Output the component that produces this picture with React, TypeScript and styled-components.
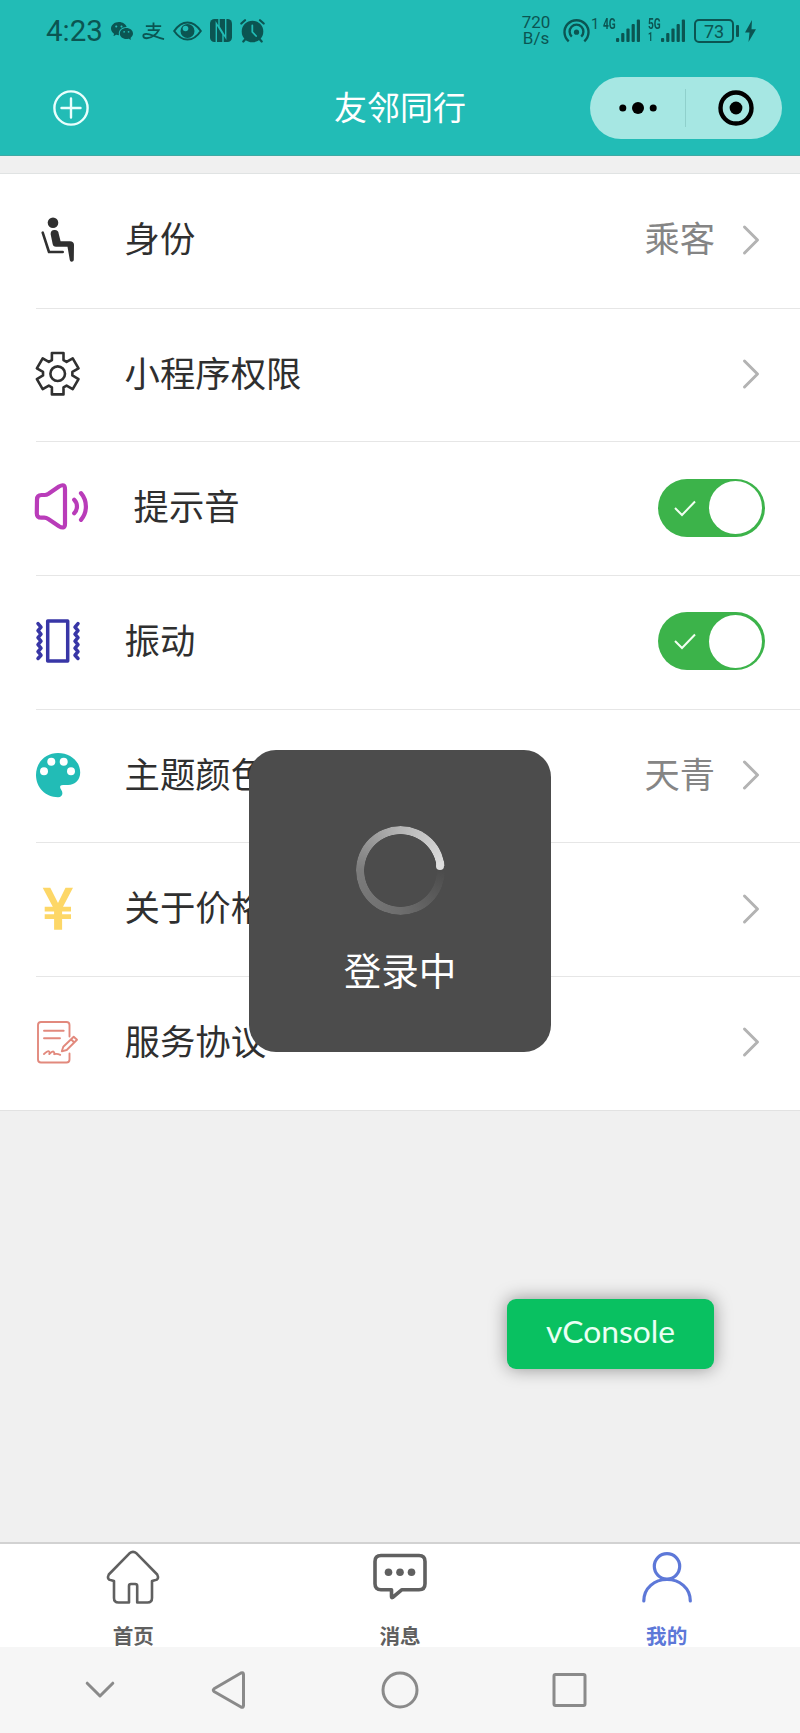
import React from 'react';
import styled, { createGlobalStyle } from 'styled-components';
import { RiWechatFill } from 'react-icons/ri';

const TEAL = '#22bcb6';
const INK = '#0b5552';
const CJK = '"Noto Sans CJK SC", sans-serif';

const GlobalStyle = createGlobalStyle`
  * { box-sizing: border-box; }
  body { margin: 0; background: #f0f0f0; font-family: ${CJK}; }
  svg { display: block; overflow: visible; flex: none; }
`;

const Screen = styled.div`
  position: relative;
  width: 800px;
  height: 1733px;
  display: flex;
  flex-direction: column;
  overflow: hidden;
  background: #f0f0f0;
`;

/* ---------- header ---------- */
const Header = styled.header`
  height: 156px;
  background: ${TEAL};
  border-bottom: 1px solid #3fa9a4;
`;

const StatusBar = styled.div`
  height: 61px;
  padding: 0 43px 0 46px;
  display: flex;
  align-items: center;
  justify-content: space-between;
  color: ${INK};
  font-family: Roboto, sans-serif;
`;

const StatusGroup = styled.div`
  display: flex;
  align-items: center;
`;

const StatusIcons = styled(StatusGroup)`
  gap: 8px;
`;

const Clock = styled.span`
  width: 64px;
  font-size: 29.5px;
  line-height: 60px;
`;

const Speed = styled.div`
  width: 30px;
  margin-right: 12px;
  font-size: 17px;
  line-height: 15.5px;
  text-align: center;
`;

const HotspotCount = styled.span`
  width: 13px;
  height: 23px;
  padding-left: 1px;
  font-size: 14.5px;
  line-height: 11px;
`;

const Signal = styled.div`
  width: 37px;
  height: 23px;
  margin-right: 8px;
  display: flex;
`;

const NetLabel = styled.div`
  width: 13px;
  height: 23px;
  display: flex;
  flex-direction: column;
  justify-content: space-between;
  font-size: 14.5px;
  font-weight: 700;
  line-height: 11px;
  transform: scaleX(0.7);
  transform-origin: left;
`;

const SlotNumber = styled.span`
  font-size: 12px;
  line-height: 9px;
`;

const Battery = styled.div`
  position: relative;
  width: 40px;
  height: 24px;
  margin: 0 11px 0 1px;
  border: 2px solid ${INK};
  border-radius: 5px;
  font-size: 18px;
  line-height: 21px;
  text-align: center;

  &::after {
    content: '';
    position: absolute;
    right: -6.5px;
    top: 4px;
    width: 2.5px;
    height: 12px;
    border-radius: 1px;
    background: ${INK};
  }
`;

const TitleBar = styled.div`
  height: 93px;
  padding: 0 18px 0 53px;
  display: grid;
  grid-template-columns: 281px 1fr 192px;
  align-items: center;
`;

const Title = styled.h1`
  margin: 0 0 4px;
  font-size: 33px;
  font-weight: 400;
  line-height: 48px;
  color: #fff;
  white-space: nowrap;
`;

const Capsule = styled.div`
  width: 192px;
  height: 62px;
  display: flex;
  align-items: center;
  border-radius: 31px;
  background: #a6e7e3;
`;

const CapsuleHalf = styled.div<{ $divided?: boolean }>`
  width: 96px;
  height: 38px;
  padding-left: ${(p) => (p.$divided ? 0 : 4)}px;
  display: flex;
  align-items: center;
  justify-content: center;
  border-right: ${(p) => (p.$divided ? '1px solid #8fd0cc' : '0')};
`;

/* ---------- settings list ---------- */
const List = styled.main`
  margin-top: 17px;
  border-top: 1px solid #e0e3e3;
  border-bottom: 1px solid #e2e2e2;
  background: #fff;
`;

const RowBody = styled.div`
  flex: 1;
  padding: 0 35px 2px 0;
  display: flex;
  align-items: center;
`;

const Row = styled.div`
  height: 133.7px;
  padding-left: 36px;
  display: flex;

  & + & > ${RowBody} { border-top: 1.5px solid #e6e6e6; }
`;

const IconSlot = styled.div<{ $wide?: boolean }>`
  width: ${(p) => (p.$wide ? 98 : 89)}px;
  margin-left: -0.5px;
`;

const Label = styled.span`
  flex: 1;
  padding-bottom: 5px;
  font-size: 35.4px;
  line-height: 52px;
  color: #2f2f2f;
`;

const Value = styled.span`
  margin-right: 28px;
  padding-bottom: 5px;
  font-size: 35.3px;
  line-height: 52px;
  color: #858585;
`;

const Arrow = styled.div`
  width: 16px;
  margin-right: 6px;
`;

const Switch = styled.div`
  width: 107px;
  height: 58px;
  padding: 0 3px 0 16px;
  display: flex;
  align-items: center;
  justify-content: space-between;
  border-radius: 29px;
  background: #3cb34a;
`;

const Knob = styled.div`
  width: 53px;
  height: 53px;
  border-radius: 50%;
  background: #fff;
`;

/* ---------- overlays ---------- */
const Toast = styled.div`
  position: absolute;
  left: 249px;
  top: 750px;
  width: 302px;
  height: 302px;
  padding-top: 76px;
  display: flex;
  flex-direction: column;
  align-items: center;
  border-radius: 27px;
  background: #4c4c4c;
`;

const Spinner = styled.div`
  position: relative;
  width: 89px;
  height: 89px;

  &::before {
    content: '';
    position: absolute;
    inset: 0;
    border-radius: 50%;
    background: conic-gradient(from 90deg, #4c4c4c 0deg, #6e6e6e 90deg, #7c7c7c 180deg, #b4b4b4 268deg, #dedede 354deg, #4c4c4c 354.5deg);
    mask: radial-gradient(circle, transparent 36px, #000 36.7px);
  }

  &::after {
    content: '';
    position: absolute;
    left: 80.8px;
    top: 36.2px;
    width: 7.8px;
    height: 7.8px;
    border-radius: 50%;
    background: #dedede;
  }
`;

const ToastText = styled.div`
  margin-top: 26px;
  font-size: 37.6px;
  line-height: 56px;
  color: #fff;
`;

const ConsoleButton = styled.button`
  position: absolute;
  left: 507px;
  top: 1299px;
  width: 207px;
  height: 70px;
  padding: 0 0 6px;
  border: 0;
  border-radius: 9px;
  background: #09c161;
  box-shadow: 0 0 18px rgba(0, 0, 0, 0.4);
  color: #eafff4;
  font-family: Lato, sans-serif;
  font-size: 31.8px;
`;

/* ---------- bottom ---------- */
const TabBar = styled.nav`
  height: 105px;
  margin-top: auto;
  display: grid;
  grid-template-columns: repeat(3, 1fr);
  border-top: 2px solid #d2d2d2;
  background: #fff;
`;

const Tab = styled.div<{ $active?: boolean }>`
  padding-top: 3px;
  display: flex;
  flex-direction: column;
  align-items: center;
  color: ${(p) => (p.$active ? '#5d78d8' : '#606060')};
`;

const TabLabel = styled.span`
  margin-top: 17px;
  font-size: 20.6px;
  line-height: 30px;
  font-weight: 700;
`;

const SystemNav = styled.div`
  height: 86px;
  display: grid;
  grid-template-columns: 200px 58px 284px 56px;
  align-items: center;
  justify-items: center;
  background: #f6f6f6;
`;

/* ---------- icons ---------- */
const AlipayIcon = () => (
  <svg width="23" height="20" viewBox="0 0 24 20" fill="none" stroke={INK} strokeWidth="1.9">
    <path d="M4 5h16M12 1v8M6 9h11.500C15.500 13 10 17.600 5 17.600c-4.500 0-5-4.600-.5-4.600 5 0 10 4 18.500 5.400" />
  </svg>
);

const EyeIcon = () => (
  <svg width="29" height="20" viewBox="0 0 29 20">
    <path d="M1.200 10Q7 1.400 14.500 1.400T27.800 10Q22 18.600 14.500 18.600T1.200 10z" fill="none" stroke={INK} strokeWidth="2" />
    <circle cx="14.500" cy="10" r="7" fill={INK} />
    <circle cx="12.500" cy="7.500" r="2.800" fill={TEAL} />
  </svg>
);

const NfcIcon = () => (
  <svg width="22" height="23" viewBox="0 0 22 23">
    <rect width="22" height="23" rx="4.500" fill={INK} />
    <path d="M6.300 23V4.500L13 15.500V23M15.700 0V18.500L9 7.500V0" fill="none" stroke={TEAL} strokeWidth="1.400" />
  </svg>
);

const AlarmIcon = () => (
  <svg width="25" height="24" viewBox="0 0 25 24" fill="none" stroke={INK} strokeWidth="2.200" strokeLinecap="round">
    <circle cx="12.500" cy="12.500" r="9.700" fill={INK} />
    <path d="M1.300 4.500 5 1.200M23.700 4.500 20 1.200M5.500 20l-2.200 2.500M19.500 20l2.200 2.500" />
    <path d="M12.300 6.500v6.500l3.800 4" stroke={TEAL} strokeWidth="1.800" />
  </svg>
);

const HotspotIcon = () => (
  <svg width="27" height="24" viewBox="0 0 27 24" fill="none" stroke={INK} strokeWidth="2.400">
    <path d="M5.700 22.300a12 12 0 1 1 15.600 0" />
    <path d="M8.800 17.600a6.900 6.900 0 1 1 9.400 0" />
    <circle cx="13.500" cy="13.200" r="2.600" fill={INK} stroke="none" />
  </svg>
);

const SignalBars = () => (
  <svg width="24" height="23" viewBox="0 0 24 23" fill={INK}>
    {[4, 9, 13.5, 18, 22.5].map((h, i) => (
      <rect key={h} x={i * 5.2} y={23 - h} width="3.200" height={h} rx="1" />
    ))}
  </svg>
);

const ListIcon = styled.svg.attrs({ width: 44, height: 44, viewBox: '0 0 44 44' })``;

const SeatIcon = () => (
  <ListIcon fill="#303030">
    <circle cx="17" cy="4.700" r="5.300" />
    <path d="M6.700 14.700 13 34h13.700" fill="none" stroke="#303030" strokeWidth="2.600" strokeLinecap="round" strokeLinejoin="round" />
    <path d="M14.700 16.500a4 4 0 0 1 8-.8L24.600 23.300H34q3.800 0 4 3.500L37.800 41.500a2 2 0 0 1-4 .4L31.500 28.700H20q-3 0-3.400-3z" />
  </ListIcon>
);

const gearPoints = Array.from({ length: 6 }, (_, i) => {
  const a = (i * Math.PI) / 3;
  return [[-5.8, -13.6], [-5.8, -20.7], [5.8, -20.7], [5.8, -13.6]]
    .map(([x, y]) => `${21.7 + x * Math.cos(a) - y * Math.sin(a)},${21.7 + x * Math.sin(a) + y * Math.cos(a)}`)
    .join(' ');
}).join(' ');

const GearIcon = () => (
  <ListIcon fill="none" stroke="#303030" strokeWidth="2.600">
    <polygon points={gearPoints} strokeLinejoin="round" />
    <circle cx="21.700" cy="21.700" r="7.300" />
  </ListIcon>
);

const SpeakerIcon = () => (
  <ListIcon fill="none" stroke="#b93cb9" strokeWidth="4.200" strokeLinecap="round" strokeLinejoin="round">
    <path d="M1 13.500q0-4.500 4.500-4.500h3q2 0 4-1.300L23 .5q6-3.500 6 2.800V37.400q0 6.300-6 2.800L12.300 33q-2-1.300-4-1.300h-3q-4.500 0-4.500-4.500z" />
    <path d="M38.200 13.800a9.500 9.500 0 0 1 0 13.400M45 7.200a20.500 20.500 0 0 1 0 26.600" />
  </ListIcon>
);

const VibrateIcon = () => (
  <ListIcon fill="none" stroke="#3836a6" strokeWidth="3.500" strokeLinecap="round" strokeLinejoin="round">
    <rect x="11.700" y="2" width="20" height="40" />
    <path d="M2 4.700 5 8.200 2 11.700 5 15.200 2 18.700 5 22.200 2 25.700 5 29.200 2 32.700 5 36.200 2 39.500" />
    <path d="M42 4.700 39 8.200 42 11.700 39 15.200 42 18.700 39 22.200 42 25.700 39 29.200 42 32.700 39 36.200 42 39.500" />
  </ListIcon>
);

const PaletteIcon = () => (
  <ListIcon fill={TEAL}>
    <path d="M22 0C34.500 0 44.200 8.500 44.200 19.500 44.200 27 39 32 32 32H27c-3.500 0-3.500 2.500-1.800 4.700C27.500 40 26.500 44.200 22 44.200 9.500 44.200 0 34.500 0 22S9.500 0 22 0z" />
    <g fill="#fff">
      <circle cx="15.300" cy="8.700" r="4" />
      <circle cx="27.700" cy="8.700" r="4" />
      <circle cx="8" cy="18.300" r="4" />
      <circle cx="35" cy="18.300" r="4" />
    </g>
  </ListIcon>
);

const YenIcon = () => (
  <ListIcon fill="#fdd767">
    <path d="M6.700.7H14.300L22 16 29.500.7H37L27 19.700H35v4.700h-8.900v2.800H35v4.700h-8.900V42.700h-8V31.900H8.700v-4.700h9.400v-2.800H8.700V19.700H16.800z" />
  </ListIcon>
);

const AgreementIcon = () => (
  <ListIcon fill="none" stroke="#e2897d" strokeWidth="1.900" strokeLinecap="round" strokeLinejoin="round">
    <path d="M33.500 16.500V5q0-3-3-3H5Q2 2 2 5V39.500q0 3 3 3H30.500q3 0 3-3V33.500M8 10.700H27.700M8 18.300H24" />
    <path d="M8 34q4-3.500 5-2.600t.3 2.600q3.200-3.200 4.300-2.300t.6 2.500q3-.8 6 .6" />
    <path d="M25.800 31.300 27.300 26.800 37.700 16.700 41 19.800 30.700 30zM35 19.300l3.300 3.200" />
  </ListIcon>
);

const ArrowIcon = () => (
  <Arrow>
    <svg width="16" height="28" viewBox="0 0 16 28" fill="none" stroke="#b3b3b3" strokeWidth="3" strokeLinecap="round" strokeLinejoin="round">
      <path d="M1.500 1 14.500 14 1.500 27" />
    </svg>
  </Arrow>
);

const Toggle = () => (
  <Switch>
    <svg width="22" height="16" viewBox="0 0 22 16" fill="none" stroke="#f2fff2" strokeWidth="2">
      <path d="M1 8 8 15 21 1.500" />
    </svg>
    <Knob />
  </Switch>
);

const TabIcon = styled.svg.attrs({ width: 56, height: 56, viewBox: '0 0 56 56' })`
  fill: none;
  stroke: currentColor;
  stroke-linecap: round;
  stroke-linejoin: round;
`;

const NavIcon = styled.svg.attrs({ width: 40, height: 40, viewBox: '0 0 40 40' })`
  fill: none;
  stroke: #8a8a8a;
  stroke-width: 3;
  stroke-linecap: round;
  stroke-linejoin: round;
`;

type Item = { icon: React.ReactNode; label: string; value?: string; toggle?: boolean; wide?: boolean };

const items: Item[] = [
  { icon: <SeatIcon />, label: '身份', value: '乘客' },
  { icon: <GearIcon />, label: '小程序权限' },
  { icon: <SpeakerIcon />, label: '提示音', toggle: true, wide: true },
  { icon: <VibrateIcon />, label: '振动', toggle: true },
  { icon: <PaletteIcon />, label: '主题颜色', value: '天青' },
  { icon: <YenIcon />, label: '关于价格' },
  { icon: <AgreementIcon />, label: '服务协议' },
];

export default function App() {
  return (
    <Screen>
      <GlobalStyle />
      <Header>
        <StatusBar>
          <StatusGroup>
            <Clock>4:23</Clock>
            <StatusIcons>
              <RiWechatFill size={24} />
              <AlipayIcon />
              <EyeIcon />
              <NfcIcon />
              <AlarmIcon />
            </StatusIcons>
          </StatusGroup>
          <StatusGroup>
            <Speed>720<br />B/s</Speed>
            <HotspotIcon />
            <HotspotCount>1</HotspotCount>
            <Signal>
              <NetLabel><span>4G</span></NetLabel>
              <SignalBars />
            </Signal>
            <Signal>
              <NetLabel><span>5G</span><SlotNumber>1</SlotNumber></NetLabel>
              <SignalBars />
            </Signal>
            <Battery>73</Battery>
            <svg width="12" height="22" viewBox="0 0 12 22" fill={INK}>
              <path d="M7 0 0 12.500h4.500L3.500 22 11 9.300H6.500z" />
            </svg>
          </StatusGroup>
        </StatusBar>
        <TitleBar>
          <svg width="36" height="36" viewBox="0 0 36 36" fill="none" stroke="#eafffd" strokeWidth="2.400" strokeLinecap="round">
            <circle cx="18" cy="18" r="16.600" />
            <path d="M8.500 18h19M18 8.500v19" />
          </svg>
          <Title>友邻同行</Title>
          <Capsule>
            <CapsuleHalf $divided>
              <svg width="38" height="12" viewBox="0 0 38 12">
                <circle cx="3.800" cy="6" r="3.500" />
                <circle cx="19" cy="6" r="6" />
                <circle cx="34.200" cy="6" r="3.500" />
              </svg>
            </CapsuleHalf>
            <CapsuleHalf>
              <svg width="36" height="36" viewBox="0 0 36 36">
                <circle cx="18" cy="18" r="15.500" fill="none" stroke="#000" strokeWidth="4.400" />
                <circle cx="18" cy="18" r="6.400" />
              </svg>
            </CapsuleHalf>
          </Capsule>
        </TitleBar>
      </Header>

      <List>
        {items.map((item) => (
          <Row key={item.label}>
            <RowBody>
              <IconSlot $wide={item.wide}>{item.icon}</IconSlot>
              <Label>{item.label}</Label>
              {item.value && <Value>{item.value}</Value>}
              {item.toggle ? <Toggle /> : <ArrowIcon />}
            </RowBody>
          </Row>
        ))}
      </List>

      <TabBar>
        <Tab>
          <TabIcon strokeWidth="2.600">
            <path d="M24.500 6.300q3.500-2.800 7 0L52.200 27.500q2.500 5-2.500 5.800L47 34V51q0 4.500-4.500 4.500H32.200V39q0-2-2-2H26q-2 0-2 2V55.500H13.500Q9 55.500 9 51V34L6.300 33.300Q1.300 32.500 3.800 27.500z" />
          </TabIcon>
          <TabLabel>首页</TabLabel>
        </Tab>
        <Tab>
          <TabIcon strokeWidth="3.600">
            <path d="M9 8.500H47q6 0 6 6V36.700q0 6-6 6H30L20.500 50.500Q19.500 51 19.500 49.500V42.700H9q-6 0-6-6V14.500q0-6 6-6z" />
            <g fill="currentColor" stroke="none">
              <circle cx="16.500" cy="25.300" r="3.800" />
              <circle cx="28" cy="25.300" r="3.800" />
              <circle cx="39.500" cy="25.300" r="3.800" />
            </g>
          </TabIcon>
          <TabLabel>消息</TabLabel>
        </Tab>
        <Tab $active>
          <TabIcon strokeWidth="3.200">
            <circle cx="28" cy="19.300" r="12.700" />
            <path d="M4.800 54C4.800 41 15.500 32.500 28 32.500S51.300 41 51.300 54" />
          </TabIcon>
          <TabLabel>我的</TabLabel>
        </Tab>
      </TabBar>
      <SystemNav>
        <NavIcon><path d="M7.200 13.200 20 26 32.800 13.200" /></NavIcon>
        <NavIcon><path d="M5 21.500Q3.500 20 5 18.800L32 3q2.500-1 2.500 1.500V35.500Q34.500 38 32 37z" /></NavIcon>
        <NavIcon><circle cx="20" cy="20" r="17" /></NavIcon>
        <NavIcon><rect x="4" y="4.500" width="31" height="31" rx="1.500" /></NavIcon>
      </SystemNav>

      <Toast>
        <Spinner />
        <ToastText>登录中</ToastText>
      </Toast>
      <ConsoleButton>vConsole</ConsoleButton>
    </Screen>
  );
}
